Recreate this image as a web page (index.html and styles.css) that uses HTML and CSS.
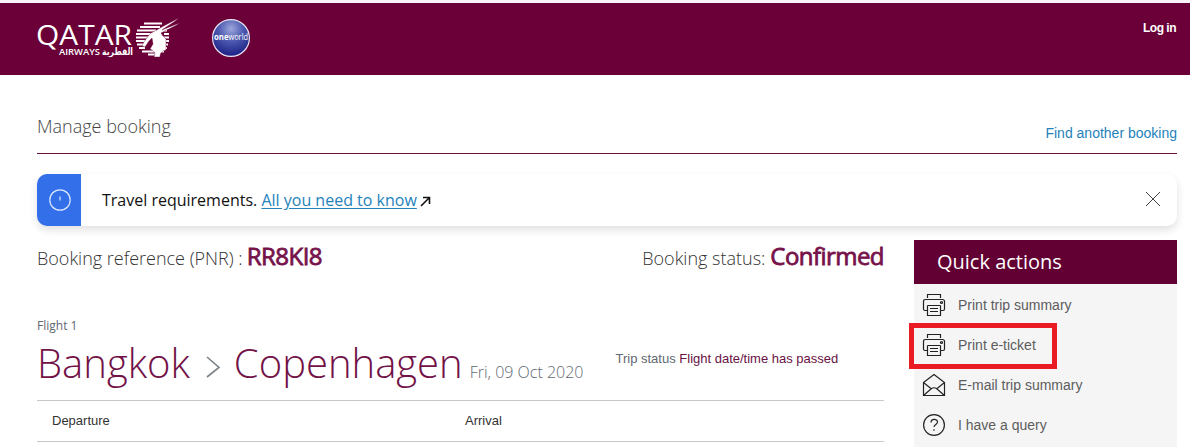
FILE: index.html
```html
<!DOCTYPE html>
<html lang="en">
<head>
<meta charset="utf-8">
<title>Manage booking</title>
<link rel="stylesheet" href="styles.css">
</head>
<body>
<svg width="0" height="0" class="defs">
  <symbol id="printer" viewBox="0 0 24 24">
    <path d="M5.500 5V1.500h13V5M5.500 17.500H3q-1.500 0-1.500-1.500V8.500q0-2 2-2h17q2 0 2 2V16q0 1.500-1.500 1.500h-2.500M5.500 12.500h13M5.500 12.500v10h13v-10M8 15.500h8M8 18.500h8"/><circle cx="19.500" cy="9.500" r="1"/>
  </symbol>
</svg>
<header class="topbar">
  <div class="brands">
    <svg class="logo" width="146" height="44" viewBox="0 0 146 44">
      <text class="logo-main" x="0" y="30" textLength="96" lengthAdjust="spacingAndGlyphs">QATAR</text>
      <text class="logo-sub" x="23" y="40" textLength="41" lengthAdjust="spacingAndGlyphs">AIRWAYS</text>
      <text class="logo-arabic" x="66" y="39.500" textLength="31" lengthAdjust="spacingAndGlyphs" direction="ltr">القطرية</text>
      <path class="stripes" d="M108 8.500h18M104 12h20M101 15.500h19M100 19h15M100 22.500h12M100 26h9M101 29.500h7M103 33h6M106 36.500h12M112 39.500h9M126 15.500h5M128 19h5M127 22.500h6M128 26h5M128 29.500h4M126 33h5M123 36.500h5"/>
      <path class="oryx" d="M106 31c1-3 5-9 9-13q6-3 9-5c7-4 13-7 19-10-6 5-12 8-17 12 7-3 12-5 18-7-8 5-14 7-19 10l2 3 3 3v11l-3 1c-2 1-3 3-3 6h-6c2-4 0-6-4-8l3-5-1-6-3 3-4 6z"/>
    </svg>
    <svg class="alliance" width="40" height="40" viewBox="0 0 40 40">
      <defs><radialGradient id="globe" cx=".5" cy=".25" r=".7"><stop offset="0" stop-color="#9ca7dc"/><stop offset=".5" stop-color="#4b58ae"/><stop offset="1" stop-color="#20268a"/></radialGradient></defs>
      <circle cx="20" cy="20" r="18.400" fill="url(#globe)" stroke="#eae4f1" stroke-width="1.200"/>
      <text x="3" y="22" textLength="14.500" lengthAdjust="spacingAndGlyphs" class="one">one</text>
      <text x="17.500" y="22" textLength="19.500" lengthAdjust="spacingAndGlyphs" class="world">world</text>
    </svg>
  </div>
  <a class="login">Log in</a>
</header>
<main class="page">
  <div class="titlebar">
    <h1 class="title">Manage booking</h1>
    <a class="find">Find another booking</a>
  </div>
  <section class="notice">
    <div class="notice-icon"><svg width="24" height="24" viewBox="0 0 24 24"><circle cx="12" cy="12" r="10.200"/><path d="M12 8.500v4"/></svg></div>
    <p class="notice-text">Travel requirements. <a class="notice-link">All you need to know</a><svg class="arrow" width="11" height="11" viewBox="0 0 11 11"><path d="M1 10L9 2M3 1.500h6.500V8"/></svg></p>
    <svg class="close" width="16" height="16" viewBox="0 0 16 16"><path d="M1 1l14 14M15 1L1 15"/></svg>
  </section>
  <div class="columns">
    <section class="trip">
      <div class="summary">
        <div class="ref"><span class="ref-label">Booking reference (PNR) :</span><strong class="pnr">RR8KI8</strong></div>
        <div class="ref"><span class="status-label">Booking status:</span><strong class="status">Confirmed</strong></div>
      </div>
      <div class="flight-no">Flight 1</div>
      <div class="route">
        <span class="city from">Bangkok</span>
        <svg class="chevron" width="16" height="24" viewBox="0 0 16 24"><path d="M2 3L14 13.500 2 23"/></svg>
        <span class="city to">Copenhagen</span>
        <span class="date">Fri, 09 Oct 2020</span>
        <span class="trip-status">Trip status <em>Flight date/time has passed</em></span>
      </div>
      <div class="table-head"><span>Departure</span><span>Arrival</span></div>
    </section>
    <aside class="actions">
      <h2 class="actions-title">Quick actions</h2>
      <ul class="list">
        <li class="item"><svg class="icon" width="24" height="24"><use href="#printer"/></svg>Print trip summary</li>
        <li class="item marked"><svg class="icon" width="24" height="24"><use href="#printer"/></svg>Print e-ticket</li>
        <li class="item"><svg class="icon" width="24" height="24" viewBox="0 0 24 24"><path d="M1.500 9.500L12 1.500 22.500 9.500V22.500H1.500zM1.500 9.500l8 6.500M22.500 9.500l-8 6.500M1.500 22.500l8-7q2.500-1.500 5 0l8 7"/></svg>E-mail trip summary</li>
        <li class="item"><svg class="icon" width="24" height="24" viewBox="0 0 24 24"><circle cx="12" cy="12" r="10.400"/><path d="M9 9.500c0-4 6.500-4 6.500-.5 0 2.500-3.500 2.300-3.500 5M12 16.300v1.400"/></svg>I have a query</li>
      </ul>
    </aside>
  </div>
</main>
</body>
</html>
```

FILE: styles.css
```css
*, *::after { box-sizing: border-box; }
body { margin: 0; height: 447px; overflow: hidden; background: #fff; font-family: "Liberation Sans", Arial, sans-serif; color: #333; }
h1, h2, p, ul { margin: 0; padding: 0; font-weight: inherit; }
svg { display: block; flex: none; fill: none; }
.defs { position: absolute; }
.topbar { height: 75px; border-top: 3px solid #fbf3f7; background: #6a0037; display: flex; justify-content: space-between; padding: 12px 14px 0 36px; }
.brands { display: flex; }
.alliance { margin: 3px 0 0 29px; }
.logo text, .alliance text { fill: #fff; }
.logo-main { font: 500 28px "Open Sans", sans-serif; }
.logo-sub { font: 600 9px "Open Sans", sans-serif; }
.logo-arabic { font: bold 10px "DejaVu Sans", sans-serif; }
.stripes { stroke: #fff; stroke-width: 1.8; }
.oryx { fill: #fff; stroke: #6a0037; stroke-width: .4; }
.one { font: bold 9px "Open Sans", sans-serif; }
.world { font: 9px "Open Sans", sans-serif; }
.login { font: bold 12px/16px "Liberation Sans", Arial, sans-serif; letter-spacing: -.5px; color: #fff; padding-top: 5px; }
.page { padding: 0 13px 0 37px; }
.titlebar { height: 79px; border-bottom: 1px solid #6a1244; display: flex; justify-content: space-between; }
.title { font: 300 18px/24px "Open Sans", sans-serif; color: #444; padding-top: 39px; }
.find { font-size: 14px; line-height: 18px; padding-top: 49px; color: #2482bb; }
.notice { height: 52px; margin-top: 20px; display: flex; align-items: center; border-radius: 10px; box-shadow: 0 4px 9px rgba(0,0,0,.12); background: #fff; }
.notice-icon { width: 44px; height: 52px; border-radius: 10px 0 0 10px; background: #336fe8; display: grid; place-items: center; padding-left: 2px; }
.notice-icon svg { stroke: #dce9ff; stroke-width: 1.2; }
.notice-text { display: flex; align-items: center; font: 16px/24px "Open Sans", sans-serif; color: #111; padding-left: 21px; white-space: pre; }
.notice-link { color: #2482bb; text-decoration: underline; text-underline-offset: 2px; }
.arrow { margin: 3px 0 0 3px; stroke: #111; stroke-width: 1.6; }
.close { margin: 0 16px 2px auto; stroke: #444; stroke-width: 1; }
.columns { display: flex; justify-content: space-between; align-items: flex-start; margin-top: 14px; }
.trip { width: 847px; }
.summary { display: flex; justify-content: space-between; height: 76px; }
.ref { display: flex; align-items: baseline; height: 34px; white-space: nowrap; }
.ref-label, .status-label { font: 300 18px/30px "Open Sans", sans-serif; color: #333; margin-right: 5px; }
.pnr, .status { font: 400 24px/31px "Open Sans", sans-serif; color: #76124a; -webkit-text-stroke: .8px #76124a; }
.pnr { letter-spacing: -.5px; margin-left: -1px; }
.status { letter-spacing: -.55px; }
.flight-no { font: 12px/20px "Open Sans", sans-serif; color: #5f6871; }
.route { display: flex; align-items: baseline; height: 64px; white-space: nowrap; line-height: 54px; }
.city { font: 300 40px/54px "Open Sans", sans-serif; color: #721247; }
.chevron { margin: 0 13px 0 15px; stroke: #7a8288; stroke-width: 1.6; }
.date { font: 300 16px/20px "Open Sans", sans-serif; color: #616971; margin-left: 7px; }
.trip-status { align-self: flex-start; margin: 14px 0 0 32px; font-size: 13px; line-height: 18px; color: #5f6871; }
.trip-status em { font-style: normal; color: #6a1244; }
.table-head { display: grid; grid-template-columns: 413px 1fr; height: 42px; border-top: 1px solid #c8c8c8; border-bottom: 1px solid #c8c8c8; padding-left: 15px; font-size: 13px; line-height: 39px; }
.actions { width: 263px; height: 207px; background: #f5f5f5; }
.actions-title { height: 44px; background: #620034; color: #fff; font: 20px/43px "Open Sans", sans-serif; padding-left: 23px; }
.list { list-style: none; padding-top: 1px; }
.item { position: relative; height: 40px; display: flex; align-items: center; gap: 12px; padding-left: 8px; font-size: 14px; color: #5d5d5d; }
.icon { stroke: #222; stroke-width: 1.2; }
.marked::after { content: ""; position: absolute; left: -5px; top: -2px; width: 148px; height: 46px; border: 5px solid #e91c24; }
```
